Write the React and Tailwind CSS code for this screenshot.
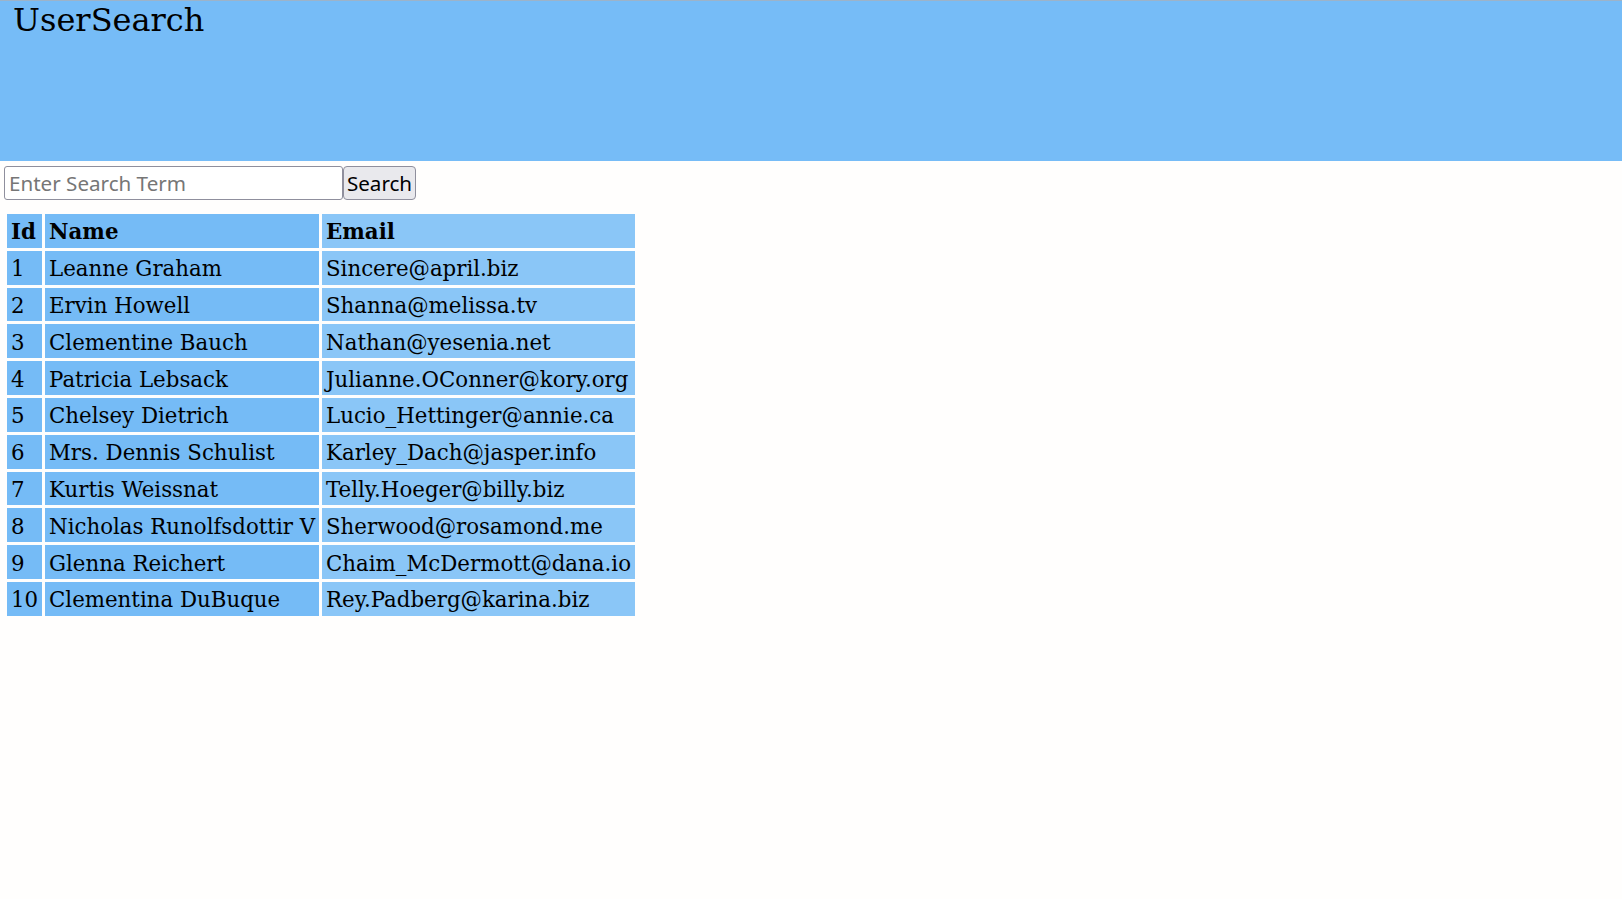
const USERS = [
  { id: 1, name: 'Leanne Graham', email: 'Sincere@april.biz' },
  { id: 2, name: 'Ervin Howell', email: 'Shanna@melissa.tv' },
  { id: 3, name: 'Clementine Bauch', email: 'Nathan@yesenia.net' },
  { id: 4, name: 'Patricia Lebsack', email: 'Julianne.OConner@kory.org' },
  { id: 5, name: 'Chelsey Dietrich', email: 'Lucio_Hettinger@annie.ca' },
  { id: 6, name: 'Mrs. Dennis Schulist', email: 'Karley_Dach@jasper.info' },
  { id: 7, name: 'Kurtis Weissnat', email: 'Telly.Hoeger@billy.biz' },
  { id: 8, name: 'Nicholas Runolfsdottir V', email: 'Sherwood@rosamond.me' },
  { id: 9, name: 'Glenna Reichert', email: 'Chaim_McDermott@dana.io' },
  { id: 10, name: 'Clementina DuBuque', email: 'Rey.Padberg@karina.biz' }
]

const cell = 'h-[33.8px] pl-[4px] pr-[2px] pt-[3px] pb-0 text-left align-middle whitespace-nowrap leading-[30px]'

export default function App() {
  return (
    <div className="min-h-screen bg-[#fffefd] text-black font-['DejaVu_Serif',serif]">
      <header className="h-[161px] border-t border-[#9cb3c9] bg-[#76bcf7] pl-[13px] pt-px">
        <h1 className="text-[32px] leading-[37px] font-normal">UserSearch</h1>
      </header>

      <form
        className="flex mt-[5px] ml-[4px] font-['Noto_Sans',sans-serif]"
        onSubmit={e => e.preventDefault()}
      >
        <input
          type="text"
          placeholder="Enter Search Term"
          className="w-[339px] h-[34px] border border-[#8f8f9d] rounded-[3px] bg-white pl-[4px] text-[20.6px] placeholder:text-[#767676] outline-none"
        />
        <button
          type="submit"
          className="w-[73px] h-[34px] border border-[#8f8f9d] rounded-[4px] bg-[#e9e9ed] text-[20.6px] text-black leading-none"
        >
          Search
        </button>
      </form>

      <table className="ml-[4px] mt-[11px] border-separate border-spacing-[3px] text-[21.33px]">
        <thead>
          <tr>
            <th className={`${cell} w-[35px] font-bold bg-[#75bbf6]`}>Id</th>
            <th className={`${cell} w-[274px] font-bold bg-[#75bbf6]`}>Name</th>
            <th className={`${cell} w-[313px] font-bold bg-[#8ac6f7]`}>Email</th>
          </tr>
        </thead>
        <tbody>
          {USERS.map(user => (
            <tr key={user.id}>
              <td className={`${cell} bg-[#75bbf6]`}>{user.id}</td>
              <td className={`${cell} bg-[#75bbf6]`}>{user.name}</td>
              <td className={`${cell} bg-[#8ac6f7]`}>{user.email}</td>
            </tr>
          ))}
        </tbody>
      </table>
    </div>
  )
}
